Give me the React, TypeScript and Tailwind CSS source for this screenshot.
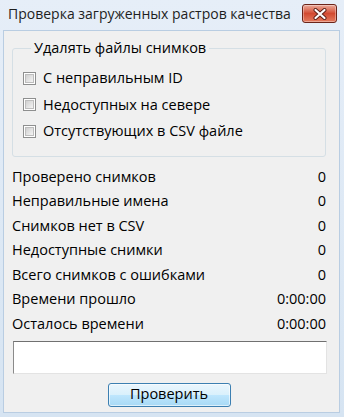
import React from 'react';

const stats = [
  { label: 'Проверено снимков', value: '0' },
  { label: 'Неправильные имена', value: '0' },
  { label: 'Снимков нет в CSV', value: '0' },
  { label: 'Недоступные снимки', value: '0' },
  { label: 'Всего снимков с ошибками', value: '0' },
  { label: 'Времени прошло', value: '0:00:00' },
  { label: 'Осталось времени', value: '0:00:00' },
];

const options = ['С неправильным ID', 'Недоступных на севере', 'Отсутствующих в CSV файле'];

function Checkbox() {
  return (
    <span className="block w-[13px] h-[13px] border border-[#8e8f8f] bg-white p-[1px] shrink-0">
      <span className="block w-full h-full bg-gradient-to-br from-[#d0d0d0] to-[#f4f4f4] border border-[#bdbdbd]" />
    </span>
  );
}

function CloseButton() {
  return (
    <div className="w-[35px] h-[19px] rounded-[3px] border border-[#6b2419] bg-gradient-to-b from-[#e9a99a] via-[#d24a31] to-[#e37a5e] flex items-center justify-center shadow-[inset_0_0_0_1px_rgba(255,255,255,0.35)]">
      <svg width="14" height="12" viewBox="0 0 14 12">
        <path d="M2.5 2 L11.5 10 M11.5 2 L2.5 10" stroke="#5a1f16" strokeWidth="4" strokeLinecap="round" />
        <path d="M2.5 2 L11.5 10 M11.5 2 L2.5 10" stroke="#ffffff" strokeWidth="2.2" strokeLinecap="round" />
      </svg>
    </div>
  );
}

export default function App() {
  return (
    <div
      className="w-[344px] h-[417px] bg-gradient-to-b from-[#e6eef8] to-[#d6e4f2] flex flex-col text-[14.5px] text-black"
      style={{ fontFamily: '"Open Sans", "Noto Sans", sans-serif' }}
    >
      {/* Title bar */}
      <div className="h-[30px] flex items-center justify-between pl-[8px] pr-[7px] shrink-0">
        <span className="text-[14px] text-[#1e1e1e] leading-none pb-[2px] whitespace-nowrap">Проверка загруженных растров качества</span>
        <div className="self-start mt-[4px] shrink-0">
          <CloseButton />
        </div>
      </div>

      {/* Client area */}
      <div className="flex-1 ml-[3px] mr-[4px] mb-[4px] bg-[#f0f0f0] border border-[#b9cde2] flex flex-col pl-[8px] pr-[13px] pt-[7px]">
        <fieldset className="border border-[#d5dfe5] rounded-[3px] pl-[10px] pb-[11px] pt-[7px]">
          <legend className="ml-[8px] px-[3px] leading-[20px]">Удалять файлы снимков</legend>
          {options.map((o) => (
            <div key={o} className="h-[26.5px] flex items-center gap-[7px]">
              <Checkbox />
              <span>{o}</span>
            </div>
          ))}
        </fieldset>

        <div className="mt-[8px] flex flex-col">
          {stats.map((s) => (
            <div key={s.label} className="h-[24.5px] flex items-center justify-between">
              <span>{s.label}</span>
              <span>{s.value}</span>
            </div>
          ))}
        </div>

        <div className="mt-[5px] h-[33px] bg-white border border-t-[#707070] border-l-[#8a8a8a] border-r-[#e3e3e3] border-b-[#e3e3e3] ml-[1px] mr-[-1px]" />

        <div className="mt-[9px] flex justify-center">
          <button className="w-[123px] h-[24px] rounded-[3px] border border-[#3c7fb1] bg-[linear-gradient(to_bottom,#eaf6fd_0%,#d9f0fc_50%,#bee6fd_51%,#a7d9f5_100%)] shadow-[inset_0_0_0_1px_rgba(255,255,255,0.6)] leading-none pb-[1px]">
            Проверить
          </button>
        </div>
      </div>
    </div>
  );
}
